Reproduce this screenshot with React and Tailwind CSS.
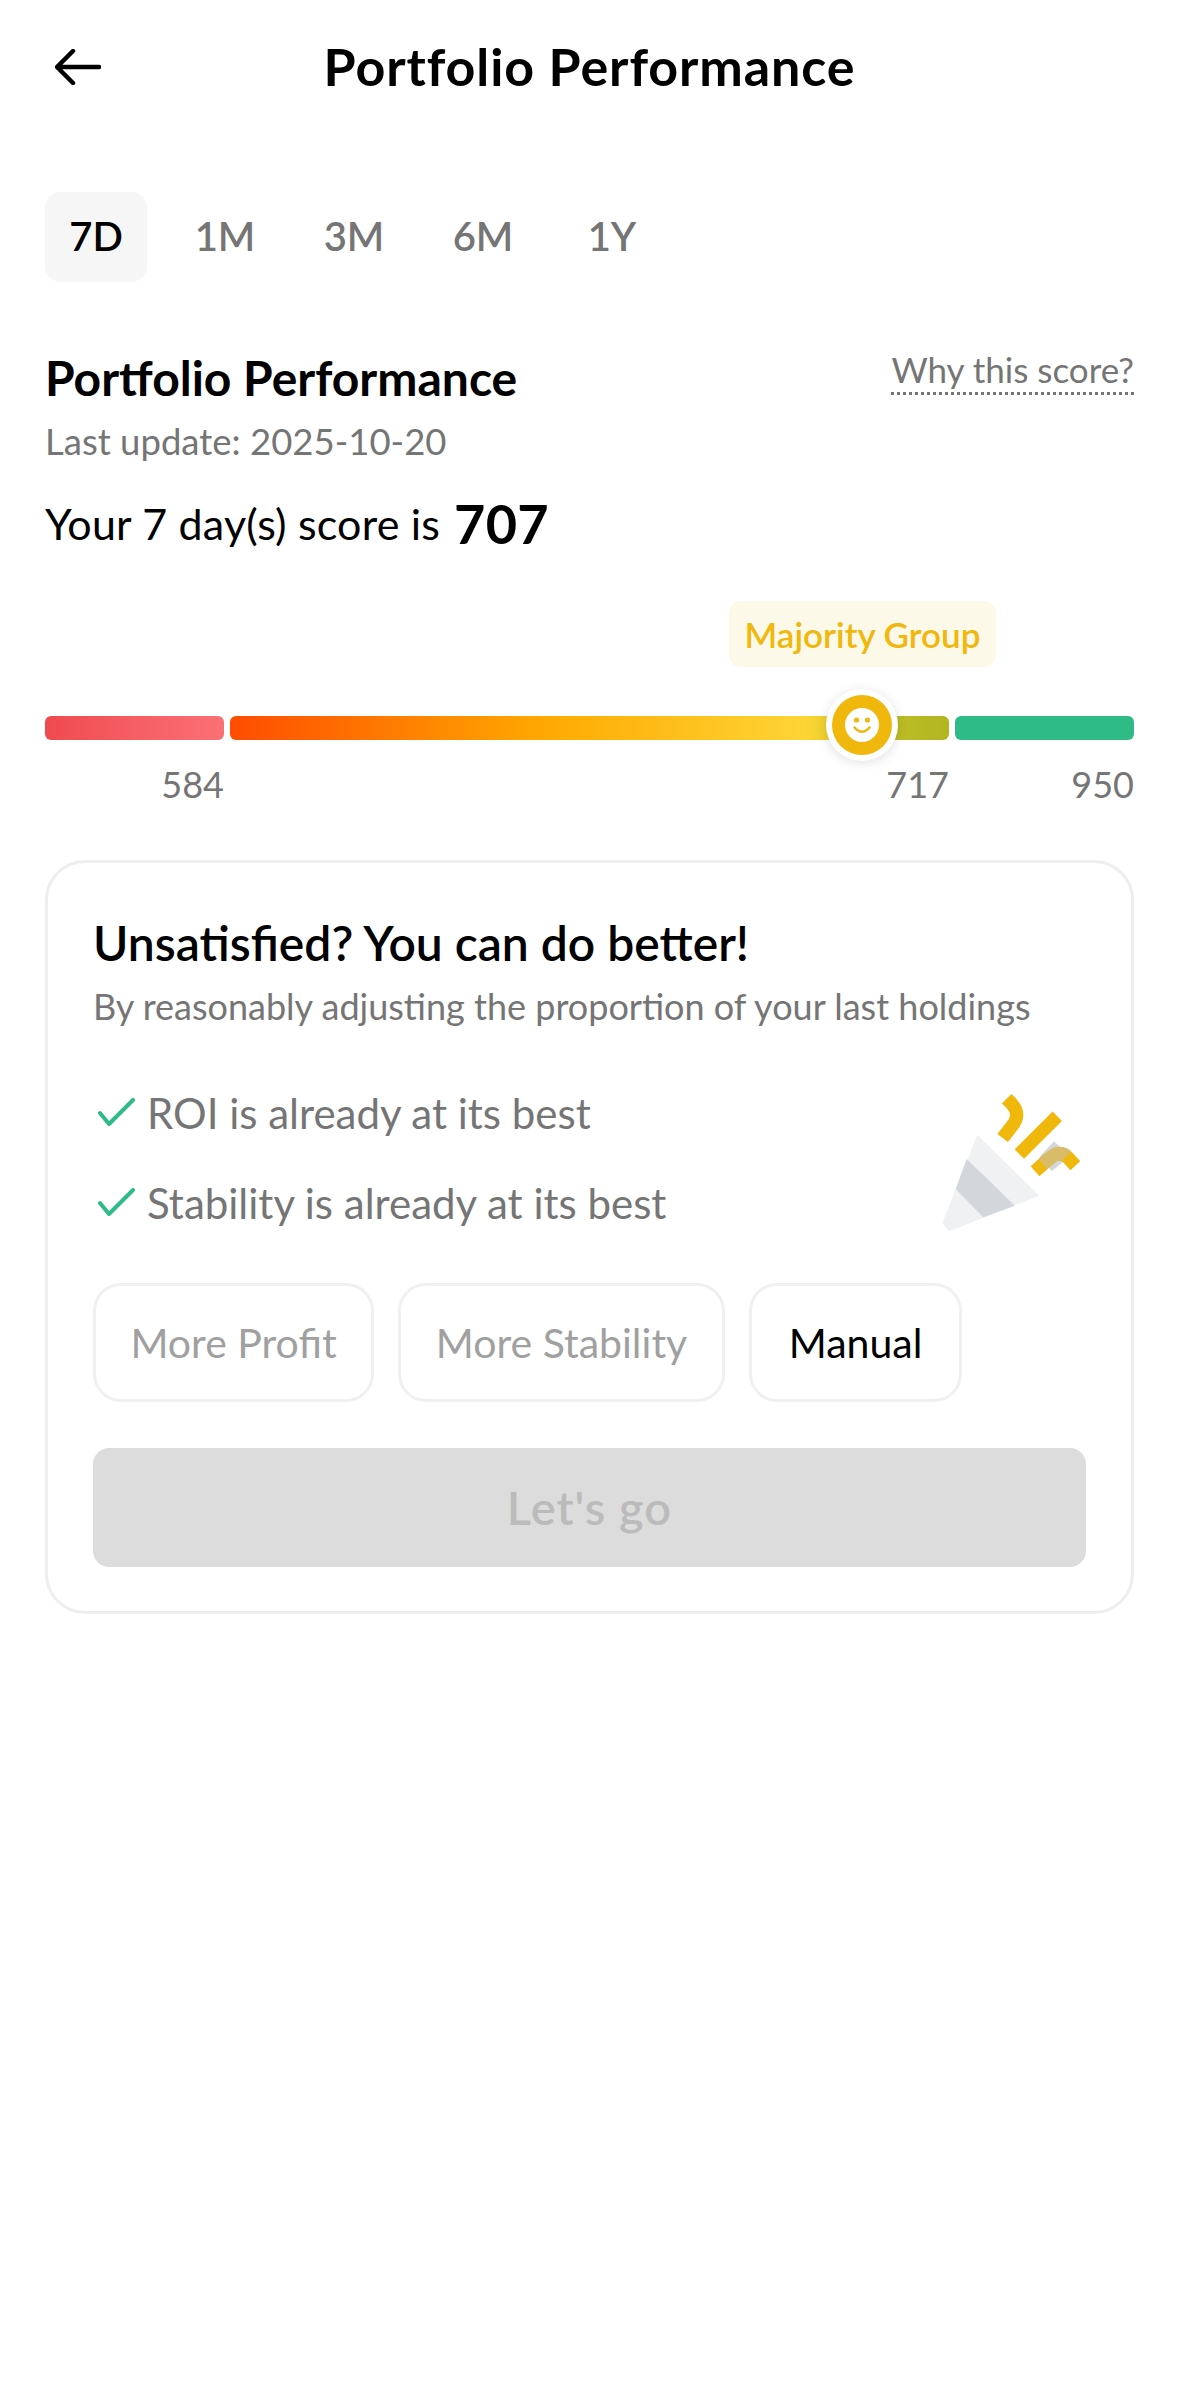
import { useState } from "react";

const ranges = ["7D", "1M", "3M", "6M", "1Y"];

function Confetti() {
  return (
    <svg viewBox="120 100 420 420" className="w-[140px] h-[140px] mr-[6px] shrink-0">
      <polygon points="232,225 418,408 148,515 127,490" fill="#eff1f3" />
      <polygon points="200,298 345,438 250,473 167,388" fill="#d3d7dc" />
      <polygon points="462,245 510,290 455,335 420,290" fill="#d3d7dc" />
      <g fill="none" stroke="#f0b70c" strokeWidth="40">
        <path d="M320 117 L335 132 Q365 165 335 200 L308 235" />
        <path d="M472 170 L358 283" />
        <path d="M405 335 L450 295 Q480 270 505 295 L526 318" />
      </g>
      <path d="M428 312 L450 295 Q480 270 500 290" fill="none" stroke="#d8bc68" strokeWidth="40" />
    </svg>
  );
}

function Check() {
  return (
    <svg viewBox="0 0 38 30" className="w-[38px] h-[30px]" fill="none" stroke="#2fbb86" strokeWidth="4" strokeLinecap="round" strokeLinejoin="round">
      <path d="M2 15 L11 26 L35 2" />
    </svg>
  );
}

export default function App() {
  const [range, setRange] = useState("7D");

  return (
    <div className="w-[1179px] h-[2396px] bg-white font-['Lato',sans-serif] text-black overflow-hidden">
      <header className="h-[134px] flex items-center justify-between pl-[55px] pr-[100px]">
        <button>
          <svg viewBox="0 0 46 36" className="w-[46px] h-[36px]" fill="none" stroke="black" strokeWidth="4.5" strokeLinecap="round" strokeLinejoin="round">
            <path d="M44 18 H3 M18 2 L2 18 L18 34" />
          </svg>
        </button>
        <h1 className="text-[52px] leading-[60px] tracking-[0.9px] font-bold pb-[3px]">Portfolio Performance</h1>
        <div className="w-[1px]" />
      </header>

      <div className="mt-[58px] pl-[45px] flex items-center">
        {ranges.map((r) => (
          <button
            key={r}
            onClick={() => setRange(r)}
            className={`w-[102px] h-[90px] mr-[27px] pb-[2px] rounded-[16px] text-[40px] font-semibold ${r === range ? "bg-[#f6f6f6] text-black" : "text-[#757575]"}`}
          >
            {r}
          </button>
        ))}
      </div>

      <section className="mt-[64px] px-[45px]">
        <div className="flex justify-between items-start">
          <h2 className="text-[48px] leading-[64px] font-bold">Portfolio Performance</h2>
          <a className="text-[35px] leading-[46px] text-[#757575] border-b-[3px] border-dotted border-[#757575]">Why this score?</a>
        </div>
        <p className="text-[36.5px] leading-[46px] text-[#757575] mt-[8px]">Last update: 2025-10-20</p>
        <p className="mt-[25px] text-[43px] leading-[70px] tracking-[0.2px] flex items-center">
          Your 7 day(s) score is <span className="ml-[14px] text-[54px] font-bold">707</span>
        </p>

        <div className="mt-[42px] ml-[684px] w-[267px] h-[66px] rounded-[12px] bg-[#fdf9e8] text-[#f0b70c] text-[35px] font-semibold flex items-center justify-center">
          Majority Group
        </div>

        <div className="relative mt-[49px] flex gap-[6px] h-[24px]">
          <div className="w-[179px] rounded-[6px] bg-gradient-to-r from-[#ef4a50] to-[#fb7075]" />
          <div className="w-[719px] rounded-[6px] bg-[linear-gradient(90deg,#ff4c00_0%,#ffa800_43%,#fdd535_80%,#bcbd26_93%,#b2b521_100%)]" />
          <div className="w-[179px] rounded-[6px] bg-[#2fbb86]" />
          <div className="absolute left-[781px] top-[-27px] w-[72px] h-[72px] rounded-full bg-white shadow-[0_2px_12px_rgba(0,0,0,0.12)] flex items-center justify-center">
            <div className="w-[60px] h-[60px] rounded-full bg-[#f0b70c] flex items-center justify-center">
              <svg viewBox="0 0 34 34" className="w-[34px] h-[34px]">
                <circle cx="17" cy="17" r="17" fill="white" />
                <circle cx="11.5" cy="12" r="2.6" fill="#f0b70c" />
                <circle cx="22.5" cy="12" r="2.6" fill="#f0b70c" />
                <path d="M9.5 19.5 Q17 28 24.5 19.5" fill="none" stroke="#f0b70c" strokeWidth="2.6" strokeLinecap="round" />
              </svg>
            </div>
          </div>
        </div>

        <div className="mt-[22px] flex gap-[6px] text-[36px] leading-[44px] text-[#757575] text-right">
          <div className="w-[179px]">584</div>
          <div className="w-[719px]">717</div>
          <div className="w-[179px]">950</div>
        </div>

        <div className="mt-[54px] h-[754px] rounded-[40px] border-[3px] border-[#eeeeee] px-[45px] pt-[48px]">
          <h3 className="text-[48px] leading-[64px] font-semibold">Unsatisfied? You can do better!</h3>
          <p className="mt-[9px] text-[36px] leading-[44px] text-[#757575]">By reasonably adjusting the proportion of your last holdings</p>

          <div className="mt-[55px] flex justify-between items-end">
            <ul className="flex flex-col gap-[30px]">
              <li className="h-[60px] flex items-center gap-[11px] pl-[5px] text-[42px] text-[#757575]"><Check />ROI is already at its best</li>
              <li className="h-[60px] flex items-center gap-[11px] pl-[5px] text-[42px] text-[#757575]"><Check />Stability is already at its best</li>
            </ul>
            <Confetti />
          </div>

          <div className="mt-[50px] flex gap-[24px] text-[41px]">
            <button className="w-[281px] h-[119px] rounded-[28px] border-[3px] border-[#f0f0f0] text-[#a0a0a0]">More Profit</button>
            <button className="w-[327px] h-[119px] rounded-[28px] border-[3px] border-[#f0f0f0] text-[#a0a0a0]">More Stability</button>
            <button className="w-[213px] h-[119px] rounded-[28px] border-[3px] border-[#f0f0f0] text-black">Manual</button>
          </div>

          <button className="mt-[46px] w-full h-[119px] rounded-[16px] bg-[#dcdcdc] text-[#bbbbbb] text-[47px] tracking-[1px] font-semibold">Let's go</button>
        </div>
      </section>
    </div>
  );
}
